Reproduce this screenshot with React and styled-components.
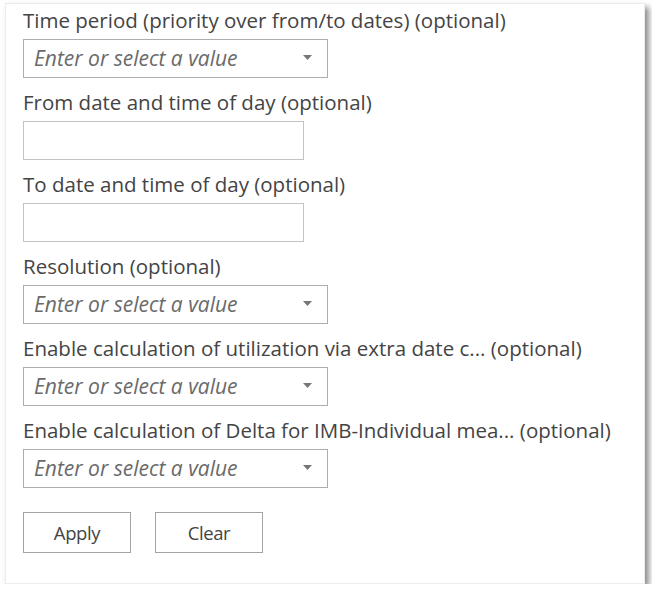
import React from "react";
import styled, { createGlobalStyle } from "styled-components";

const GlobalStyle = createGlobalStyle`
  html, body {
    margin: 0;
    padding: 0;
    background: #ffffff;
  }
  body {
    font-family: "Open Sans", "Noto Sans", sans-serif;
  }
`;

const Page = styled.div`
  padding: 3px 0 0 5px;
`;

const Panel = styled.div`
  box-sizing: border-box;
  width: 640px;
  height: 581px;
  background: #ffffff;
  border: 1px solid #ececec;
  box-shadow: 4px 4px 6px rgba(0, 0, 0, 0.45);
  padding: 4px 17px 0 17px;
  display: flex;
  flex-direction: column;
  gap: 12px;
`;

const Field = styled.div`
  display: flex;
  flex-direction: column;
  gap: 7px;
`;

const Label = styled.label`
  font-size: 20.5px;
  line-height: 24px;
  color: #444444;
  white-space: nowrap;
`;

const SelectBox = styled.div`
  box-sizing: border-box;
  width: 305px;
  height: 39px;
  border: 1px solid #adadad;
  background: #ffffff;
  display: flex;
  align-items: center;
  padding: 0 15px 0 10px;
  justify-content: space-between;
`;

const Placeholder = styled.span`
  font-size: 21px;
  font-style: italic;
  color: #6a6a6a;
  line-height: 37px;
`;

const Arrow = styled.svg`
  width: 9px;
  height: 5px;
  margin-top: -2px;
  flex: none;
`;

const TextBox = styled.div`
  box-sizing: border-box;
  width: 281px;
  height: 39px;
  border: 1px solid #c3c3c3;
  background: #ffffff;
`;

const Buttons = styled.div`
  display: flex;
  gap: 24px;
  margin-top: 12px;
`;

const Button = styled.button`
  box-sizing: border-box;
  width: 108px;
  height: 41px;
  border: 1px solid #a3a3a3;
  background: #ffffff;
  font-family: "Open Sans", "Noto Sans", sans-serif;
  font-size: 18.5px;
  color: #444444;
  padding: 0;
  letter-spacing: -0.4px;
`;

function Select() {
  return (
    <SelectBox>
      <Placeholder>Enter or select a value</Placeholder>
      <Arrow viewBox="0 0 9 5">
        <path d="M0 0 H9 L4.5 5 Z" fill="#777777" />
      </Arrow>
    </SelectBox>
  );
}

const fields = [
  { label: "Time period (priority over from/to dates) (optional)", kind: "select" },
  { label: "From date and time of day (optional)", kind: "text" },
  { label: "To date and time of day (optional)", kind: "text" },
  { label: "Resolution (optional)", kind: "select" },
  { label: "Enable calculation of utilization via extra date c... (optional)", kind: "select" },
  { label: "Enable calculation of Delta for IMB-Individual mea... (optional)", kind: "select" },
];

export default function App() {
  return (
    <>
      <GlobalStyle />
      <Page>
        <Panel>
          {fields.map((f) => (
            <Field key={f.label}>
              <Label>{f.label}</Label>
              {f.kind === "select" ? <Select /> : <TextBox />}
            </Field>
          ))}
          <Buttons>
            <Button type="button">Apply</Button>
            <Button type="button">Clear</Button>
          </Buttons>
        </Panel>
      </Page>
    </>
  );
}
